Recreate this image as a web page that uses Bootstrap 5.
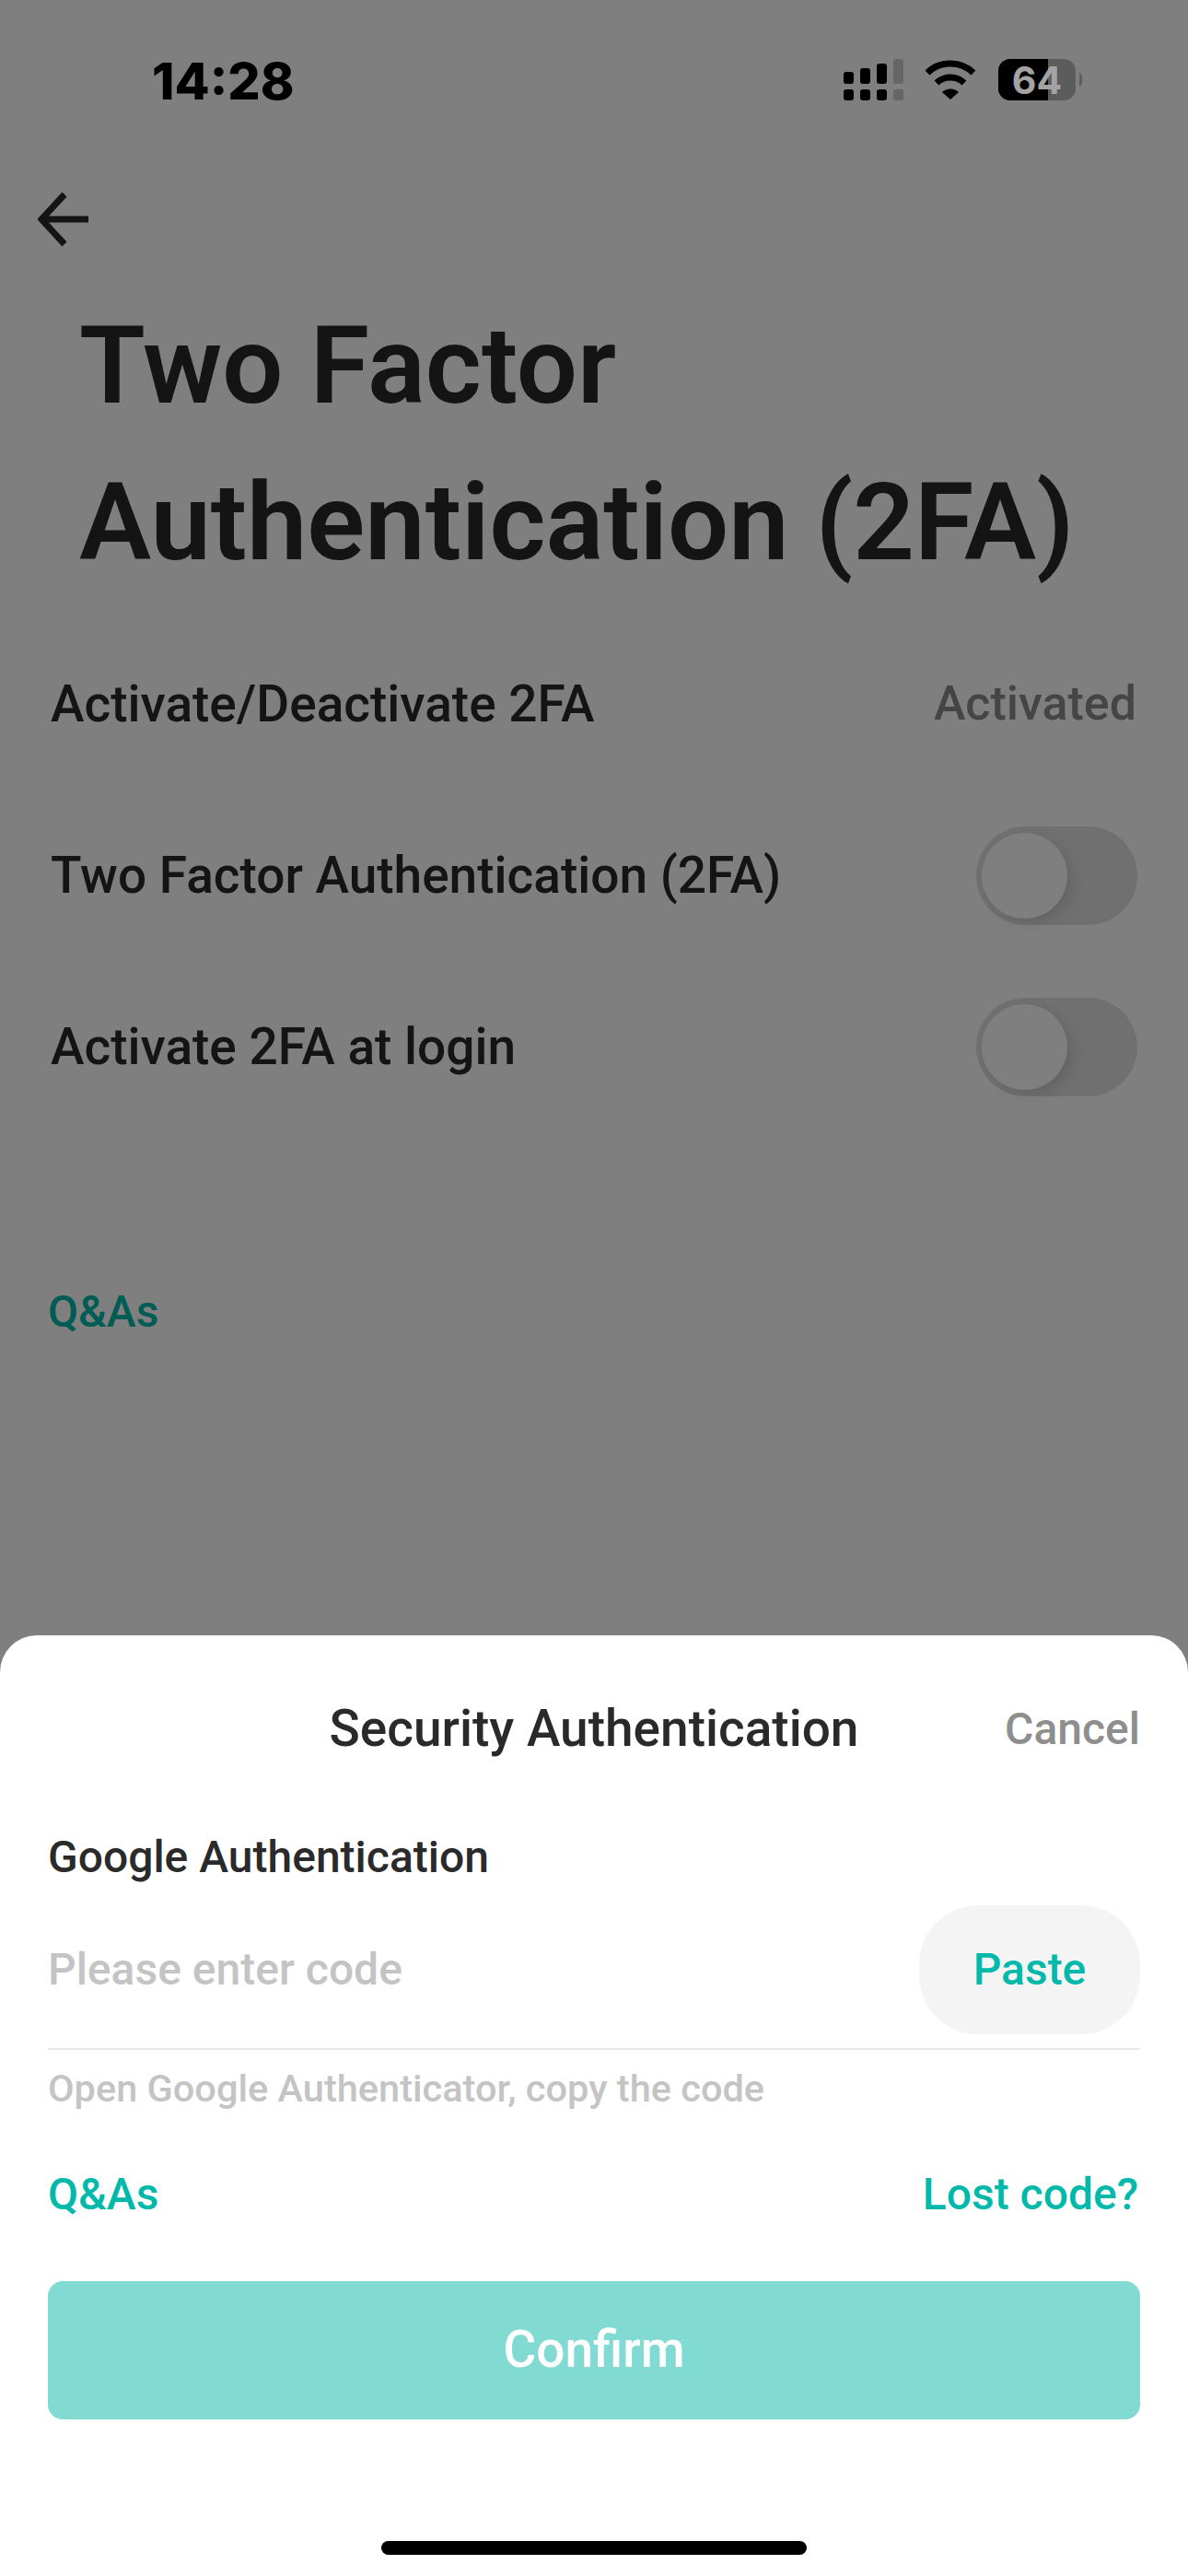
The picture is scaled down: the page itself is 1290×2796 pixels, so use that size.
<!DOCTYPE html>
<html lang="en">
<head>
  <meta charset="UTF-8" />
  <meta name="viewport" content="width=device-width, initial-scale=1.0"/>
  <title>Two Factor Authentication</title>
  <link href="https://cdn.jsdelivr.net/npm/bootstrap@5.3.3/dist/css/bootstrap.min.css" rel="stylesheet"/>
  <style>
    body {
      margin: 0;
      background: #fff;
      font-family: Roboto, "Liberation Sans", sans-serif;
      color: #282828;
    }

    .phone {
      width: 1290px;
      height: 2796px;
      overflow: hidden;
      background: #fff;
    }

    .status-row {
      height: 170px;
      padding: 0 90px 0 165px;
      z-index: 3;
    }

    .clock {
      font-family: Inter, "Liberation Sans", sans-serif;
      font-weight: 800;
      font-size: 55.5px;
      color: #000;
      line-height: 1;
      padding-top: 6px;
    }

    .back-row {
      padding: 38px 0 0 41px;
      height: 142px;
    }

    .page-title {
      margin: 0;
      padding-left: 86px;
      font-size: 117px;
      line-height: 170px;
      font-weight: 600;
    }

    .set-list {
      padding: 19px 56px 0 55px;
    }

    .set-row {
      height: 186px;
      font-size: 55px;
      font-weight: 500;
    }

    .set-state {
      color: #8a8a8a;
      font-size: 52px;
    }

    .tog {
      width: 175px;
      height: 107px;
      border-radius: 54px;
      background: #e0e0e0;
      margin-right: -1px;
    }

    .tog::after {
      content: "";
      position: absolute;
      left: 6px;
      top: 7px;
      width: 93px;
      height: 93px;
      border-radius: 50%;
      background: #fff;
      box-shadow: 6px 6px 14px rgba(0, 0, 0, .1);
    }

    .faq-link {
      color: #00b9ab;
      font-size: 48px;
      font-weight: 500;
      text-decoration: none;
      line-height: 1;
    }

    .faq-top {
      display: inline-block;
      padding: 171px 0 0 52px;
    }

    .dim-layer {
      background: rgba(0, 0, 0, .5);
      z-index: 1;
    }

    .sheet {
      height: 1021px;
      z-index: 2;
      background: #fff;
      border-radius: 40px 40px 0 0;
      padding: 0 52px;
    }

    .sheet-head {
      height: 213px;
      padding-bottom: 11px;
    }

    .sheet-title {
      margin: 0;
      font-size: 55px;
      font-weight: 500;
      color: #2a2a2a;
    }

    .sheet-cancel {
      right: 0;
      top: 102px;
      transform: translateY(-50%);
      font-size: 48px;
      font-weight: 500;
      color: #8e8e8e;
    }

    .code-label {
      font-size: 48px;
      font-weight: 500;
      color: #2a2a2a;
      line-height: 56px;
      margin-bottom: 24px;
      display: block;
    }

    .code-box {
      height: 157px;
      border-bottom: 2px solid #e9e9e9;
      padding-bottom: 16px;
    }

    .code-input.form-control {
      border: 0;
      padding: 0;
      font-size: 48px;
      font-weight: 500;
      box-shadow: none;
    }

    .code-input::placeholder {
      color: #c4c4c4;
      opacity: 1;
    }

    .paste-btn.btn {
      width: 240px;
      height: 140px;
      border: 0;
      border-radius: 64px;
      background: #f4f4f4;
      color: #00b9ab;
      font-size: 48px;
      font-weight: 500;
    }

    .code-hint {
      font-size: 41.5px;
      font-weight: 500;
      color: #c4c4c4;
      line-height: 48px;
      margin-top: 18px;
    }

    .sheet-links {
      margin-top: 67px;
      padding-right: 2px;
    }

    .confirm-btn.btn {
      height: 150px;
      margin-top: 70px;
      padding-bottom: 8px;
      border: 0;
      border-radius: 16px;
      background: #82dbd3;
      color: #fff;
      font-size: 55px;
      font-weight: 500;
      opacity: 1;
    }

    .home-bar {
      left: 414px;
      bottom: 23px;
      width: 462px;
      height: 15px;
      border-radius: 8px;
      background: #000;
      z-index: 3;
    }
  </style>
</head>
<body>

  <div class="phone position-relative">
    <div class="status-row position-relative d-flex justify-content-between align-items-center">
      <span class="clock">14:28</span>
      <svg width="320" height="90" viewBox="0 0 320 90">
        <g fill="#000">
          <rect x="36" y="38" width="11" height="13" rx="3"/>
          <rect x="54" y="34" width="11" height="17" rx="3"/>
          <rect x="72" y="29" width="11" height="22" rx="3"/>
          <rect x="36" y="57" width="11" height="12" rx="3"/>
          <rect x="54" y="57" width="11" height="12" rx="3"/>
          <rect x="72" y="57" width="11" height="12" rx="3"/>
        </g>
        <g fill="#666">
          <rect x="90" y="24" width="11" height="27" rx="3"/>
          <rect x="90" y="57" width="11" height="12" rx="3"/>
        </g>
        <g fill="none" stroke="#000" stroke-width="7">
          <path d="M127 39a36 36 0 0 1 50 0"/>
          <path d="M137 50a22 22 0 0 1 30 0"/>
        </g>
        <path d="M143 60a13 13 0 0 1 18 0l-9 8z" fill="#000"/>
        <rect x="204" y="24" width="84" height="45" rx="13" fill="#5c5c5c"/>
        <path d="M258 24h-41a13 13 0 0 0-13 13v19a13 13 0 0 0 13 13h41z" fill="#000"/>
        <path d="M292 39a5 8 0 0 1 0 15z" fill="#5c5c5c"/>
        <text x="246" y="62" text-anchor="middle" font-family="Inter, sans-serif" font-weight="700" font-size="41" fill="#a3a3a3">64</text>
      </svg>
    </div>

    <div class="back-row">
      <svg width="56" height="60" viewBox="0 0 56 60">
        <path d="M55 30H5M29 3 4 30l25 27" fill="none" stroke="#282828" stroke-width="7"/>
      </svg>
    </div>

    <h1 class="page-title">Two Factor<br>Authentication (2FA)</h1>

    <div class="set-list">
      <div class="set-row d-flex justify-content-between align-items-center">
        <span>Activate/Deactivate 2FA</span>
        <span class="set-state">Activated</span>
      </div>
      <div class="set-row d-flex justify-content-between align-items-center">
        <span>Two Factor Authentication (2FA)</span>
        <span class="tog position-relative d-block" role="switch" aria-checked="false"></span>
      </div>
      <div class="set-row d-flex justify-content-between align-items-center">
        <span>Activate 2FA at login</span>
        <span class="tog position-relative d-block" role="switch" aria-checked="false"></span>
      </div>
    </div>

    <a href="#" class="faq-link faq-top">Q&amp;As</a>

    <div class="dim-layer position-absolute top-0 start-0 w-100 h-100"></div>

    <div class="sheet position-absolute bottom-0 start-0 w-100">
      <div class="sheet-head position-relative d-flex justify-content-center align-items-center">
        <h2 class="sheet-title">Security Authentication</h2>
        <span class="sheet-cancel position-absolute">Cancel</span>
      </div>
      <label class="code-label" for="codeInput">Google Authentication</label>
      <div class="code-box d-flex justify-content-between align-items-center">
        <input id="codeInput" type="text" class="code-input form-control" placeholder="Please enter code">
        <button type="button" class="paste-btn btn flex-shrink-0">Paste</button>
      </div>
      <div class="code-hint">Open Google Authenticator, copy the code</div>
      <div class="sheet-links d-flex justify-content-between">
        <a href="#" class="faq-link">Q&amp;As</a>
        <a href="#" class="faq-link">Lost code?</a>
      </div>
      <button type="button" class="confirm-btn btn w-100 d-block">Confirm</button>
    </div>

    <div class="home-bar position-absolute"></div>
  </div>

  <script src="https://cdn.jsdelivr.net/npm/bootstrap@5.3.3/dist/js/bootstrap.bundle.min.js"></script>
</body>
</html>
